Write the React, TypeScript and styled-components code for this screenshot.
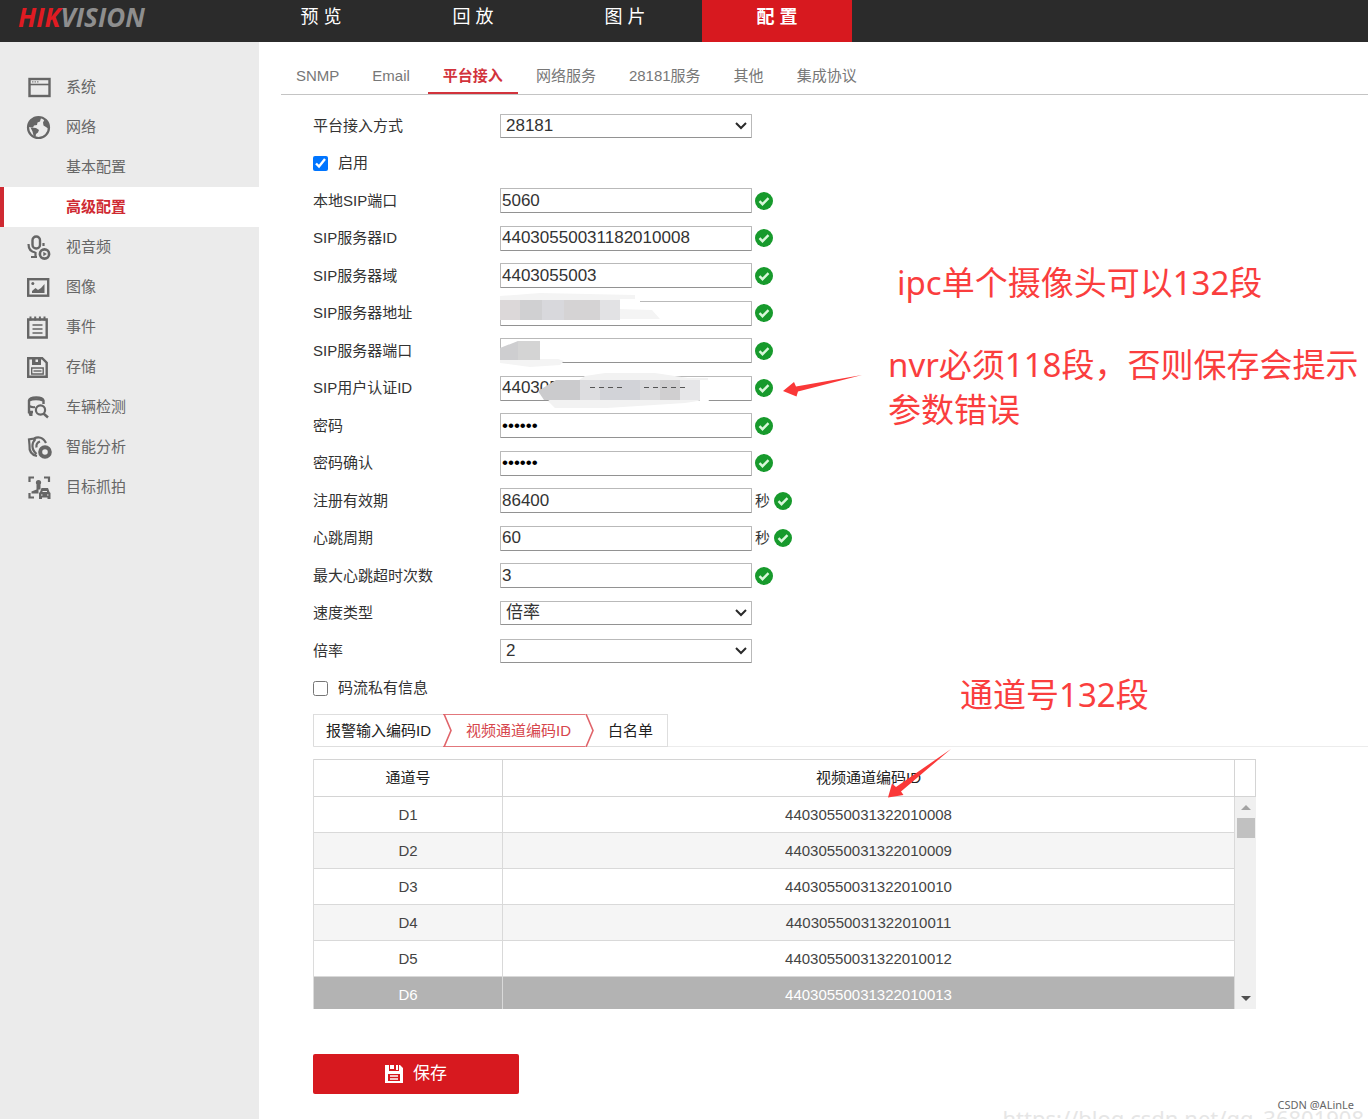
import React from "react";
import styled, { createGlobalStyle, css } from "styled-components";

const sans = '"Liberation Sans", Arial, "Noto Sans CJK SC", sans-serif';
const red = "#d7191f";

const GlobalStyle = createGlobalStyle`
  *, *::before, *::after { box-sizing: border-box; }
  body { margin: 0; background: #fff; color: #333; font: 15px/20px ${sans}; }
  input, select, button { font-family: inherit; }
`;

const Page = styled.div`
  position: relative;
  display: flex;
  flex-direction: column;
  min-height: 100vh;
  overflow: hidden;
`;

const Header = styled.header`
  display: flex;
  height: 42px;
  background: #2b2b2b;
`;

const Logo = styled.a`
  width: 246px;
  padding-left: 18px;
  font: italic 700 26px/34px "Open Sans", "Noto Sans", sans-serif;
  color: #8e8e8e;
  text-decoration: none;
`;

const LogoAccent = styled.span`
  color: #e01b22;
`;

const TopNav = styled.nav`
  display: flex;
  gap: 2px;
`;

const TopLink = styled.a<{ $active?: boolean }>`
  width: 150px;
  height: 42px;
  font-size: 18px;
  line-height: 34px;
  text-align: center;
  text-decoration: none;
  color: #fff;
  font-weight: ${(p) => (p.$active ? 700 : 400)};
  background: ${(p) => (p.$active ? red : "transparent")};
`;

const Body = styled.div`
  display: flex;
  flex: 1;
`;

const Sidebar = styled.nav`
  flex: 0 0 259px;
  padding-top: 25px;
  background: #ebebeb;
`;

const SideLink = styled.a<{ $active?: boolean }>`
  display: flex;
  align-items: center;
  height: 40px;
  padding-left: 22px;
  border-left: 4px solid transparent;
  color: #666;
  text-decoration: none;
  ${(p) =>
    p.$active &&
    css`
      background: #fff;
      border-left-color: #cf2a32;
      color: #cf2a32;
      font-weight: 700;
    `}
`;

const SideIcon = styled.span`
  flex: 0 0 40px;
  height: 24px;
  svg { display: block; }
`;

const Main = styled.main`
  flex: 1;
  min-width: 0;
  padding-bottom: 25px;
`;

const Tabs = styled.nav`
  display: flex;
  gap: 3px;
  margin-left: 22px;
  padding-top: 17px;
  border-bottom: 1px solid #c4c4c4;
`;

const Tab = styled.a<{ $active?: boolean }>`
  height: 35px;
  padding: 0 15px;
  line-height: 33px;
  text-decoration: none;
  border-bottom: 2px solid ${(p) => (p.$active ? "#d2333c" : "transparent")};
  color: ${(p) => (p.$active ? "#d2333c" : "#777")};
  font-weight: ${(p) => (p.$active ? 700 : 400)};
`;

const Content = styled.form`
  margin-left: 54px;
  padding-top: 12px;
`;

const Row = styled.div`
  display: flex;
  align-items: center;
  height: 37px;
  &:nth-child(even) { height: 38px; }
`;

const Label = styled.label`
  flex: 0 0 187px;
`;

const CheckLabel = styled.label`
  display: flex;
  align-items: center;
  gap: 10px;
`;

const Checkbox = styled.input`
  width: 15px;
  height: 15px;
  margin: 0;
`;

const FieldBox = styled.span`
  position: relative;
  display: flex;
  flex: 0 0 252px;
`;

const fieldStyle = css`
  width: 100%;
  border: 1px solid #b9b9b9;
  border-bottom-color: #929292;
  border-radius: 1px;
  background: #fff;
  color: #333;
  font-size: 17px;
  line-height: 20px;
`;

const TextInput = styled.input`
  ${fieldStyle}
  height: 25px;
  padding: 0 1px;
  &[type="password"] { color: #000; }
`;

const Select = styled.select`
  ${fieldStyle}
  appearance: none;
  height: 24px;
  padding: 0 24px 0 5px;
`;

const SelectArrow = styled.svg`
  position: absolute;
  right: 5px;
  top: 8px;
  pointer-events: none;
`;

const Mask = styled.svg`
  position: absolute;
  left: 0;
  top: -8px;
  pointer-events: none;
`;

const Suffix = styled.span`
  display: flex;
  align-items: center;
  gap: 4px;
  padding-left: 3px;
`;

const StepBar = styled.nav`
  display: flex;
  height: 33px;
  margin-top: 7px;
  border-left: 1px solid #dcdcdc;
  border-bottom: 1px solid #ececec;
`;

const Step = styled.a<{ $active?: boolean; $first?: boolean; $last?: boolean }>`
  height: 33px;
  padding: 0 ${(p) => (p.$first ? 12 : 14)}px;
  line-height: 31px;
  text-decoration: none;
  color: ${(p) => (p.$active ? "#d6454c" : "#222")};
  border: solid ${(p) => (p.$active ? "#e2777c" : "#dedede")};
  border-width: 1px ${(p) => (p.$last ? 1 : 0)}px 1px 0;
`;

const StepArrow = styled.svg`
  flex: 0 0 9px;
`;

const TableFrame = styled.div`
  display: grid;
  grid-template-columns: 1fr 21px;
  grid-template-rows: 250px;
  margin: 12px 112px 0 0;
  overflow: hidden;
`;

const Table = styled.table`
  width: 100%;
  align-self: start;
  border-collapse: separate;
  border-spacing: 0;
  table-layout: fixed;
  border-left: 1px solid #dcdcdc;
`;

const HeadCell = styled.th<{ $narrow?: boolean }>`
  width: ${(p) => (p.$narrow ? "189px" : "auto")};
  height: 38px;
  padding: 0;
  font-weight: 400;
  color: #222;
  border: solid #d4d4d4;
  border-width: 1px 1px 1px 0;
`;

const BodyRow = styled.tr<{ $selected?: boolean }>`
  background: ${(p) => (p.$selected ? "#b3b3b3" : "#fff")};
  color: ${(p) => (p.$selected ? "#fff" : "#444")};
  &:nth-child(even) { background: ${(p) => (p.$selected ? "#b3b3b3" : "#f5f5f5")}; }
`;

const Cell = styled.td`
  height: 36px;
  padding: 0;
  text-align: center;
  border: solid #d9d9d9;
  border-width: 0 1px 1px 0;
`;

const ScrollColumn = styled.div`
  display: flex;
  flex-direction: column;
`;

const ScrollHead = styled.div`
  height: 38px;
  border: solid #d4d4d4;
  border-width: 1px 1px 1px 0;
`;

const ScrollTrack = styled.div`
  display: flex;
  flex: 1;
  flex-direction: column;
  align-items: center;
  background: #f0f0f0;
`;

const ScrollButton = styled.button`
  display: flex;
  align-items: center;
  justify-content: center;
  width: 18px;
  height: 21px;
  padding: 0;
  border: 0;
  background: transparent;
`;

const ScrollThumb = styled.div`
  width: 18px;
  height: 20px;
  margin-bottom: auto;
  background: #c1c1c1;
`;

const SaveButton = styled.button`
  display: flex;
  align-items: center;
  justify-content: center;
  gap: 10px;
  width: 206px;
  height: 40px;
  margin-top: 45px;
  border: 0;
  border-radius: 2px;
  background: ${red};
  color: #fff;
  font-size: 17px;
  line-height: 24px;
`;

const Note = styled.p<{ $x: number; $y: number }>`
  position: absolute;
  left: ${(p) => p.$x}px;
  top: ${(p) => p.$y}px;
  margin: 0;
  font: 33px/45px "Noto Sans", "Noto Sans CJK SC", sans-serif;
  color: #fa3e3e;
  white-space: nowrap;
`;

const NoteArrow = styled.svg<{ $x: number; $y: number }>`
  position: absolute;
  left: ${(p) => p.$x}px;
  top: ${(p) => p.$y}px;
  fill: #fa3838;
`;

const UrlMark = styled.span`
  position: absolute;
  right: 4px;
  bottom: -13px;
  font: 22px/28px "Noto Sans", sans-serif;
  color: #e6e6e6;
`;

const AuthorMark = styled.span`
  position: absolute;
  right: 14px;
  bottom: 4px;
  font: 11px/20px "Noto Sans", sans-serif;
  color: #666;
`;

type IconName =
  | "system" | "network" | "av" | "image" | "event"
  | "storage" | "vehicle" | "smart" | "target";

const iconShapes: Record<IconName, React.ReactNode> = {
  system: (
    <>
      <rect x="3.5" y="4" width="20" height="17" strokeWidth="2.4" />
      <path d="M3 9.500h21" strokeWidth="1.6" />
      <path d="M6 6.900h1.5M8.5 6.900H10M11 6.900h1.5" strokeWidth="1" />
    </>
  ),
  network: (
    <>
      <circle cx="12.500" cy="12.500" r="10.500" strokeWidth="2.200" />
      <path d="M2.500 12C2.500 7 7 2.500 12 2.500l3 .500-1 3.500-2.500 1-.500 2.500-3 .500-1 2z" fill="#666" stroke="none" />
      <path d="M4.500 12.500l5.500.500 3 2-1 2.500-2 1.500-.500 3-2-1.500-1-4z" fill="#666" stroke="none" />
      <path d="M18.500 4.500l3.500 4v5l-2-1.500-2.500-1.500-.500-3z" fill="#666" stroke="none" />
    </>
  ),
  av: (
    <>
      <rect x="6.500" y="1.500" width="7.500" height="12" rx="3.700" strokeWidth="2.400" />
      <path d="M2.500 9c0 6 3 8 7 8.500M17.500 8v3M9.500 17v5M5 22h6" strokeWidth="2.200" />
      <circle cx="18.500" cy="19" r="4.600" strokeWidth="2.600" />
      <path d="M17.300 16.800l3.500 2.200-3.500 2.200z" fill="#666" stroke="none" />
    </>
  ),
  image: (
    <>
      <rect x="2.200" y="4.200" width="20" height="16.500" strokeWidth="2.400" />
      <path d="M6 18v-2l3.500-3 2.500 2 3-2 3.500-4v9z" fill="#666" stroke="none" />
      <circle cx="6.800" cy="8.500" r="1.500" fill="#666" stroke="none" />
    </>
  ),
  event: (
    <>
      <path d="M2.200 4.500h18.500v18H2.200z" strokeWidth="2.400" />
      <path d="M4.500 1.500v4M9.200 1.500v4M13.900 1.500v4M18.500 1.500v4" strokeWidth="2" />
      <path d="M6.500 10h10M6.500 14h10M6.500 18h10" strokeWidth="1.500" />
    </>
  ),
  storage: (
    <>
      <path d="M2.200 3.200h14l4.500 4.500v14H2.200z" strokeWidth="2.400" />
      <path d="M6 3v7h9V3h-3v4H9.500V3z" fill="#666" stroke="none" />
      <path d="M5.700 19v-6h11.500v6z" strokeWidth="1.400" />
      <path d="M7.500 16h8" strokeWidth="1.400" />
    </>
  ),
  vehicle: (
    <>
      <path d="M17.500 9V5.500c-1-4-13.500-4-14.500 0V17h4" strokeWidth="2.400" />
      <path d="M3 5.500c4-1.500 10-1.500 14 0M3 11c2 1 4 1.500 6 1" strokeWidth="2" />
      <path d="M2 17h4.500v4h-3z" fill="#666" stroke="none" />
      <circle cx="14.500" cy="15" r="4.600" strokeWidth="2.200" />
      <path d="M17.500 18.500l4.500 4" strokeWidth="2.400" />
    </>
  ),
  smart: (
    <>
      <path d="M11 21C6 20 3 16 3.500 10L3 4.500 8 3.500c4-2 9-1.500 12 4.500M9.500 4c-4 4-4.500 10 1 15M14 6.500c-3 1-4 3-3.500 6" strokeWidth="2.200" />
      <circle cx="19" cy="17" r="4.800" strokeWidth="4" />
    </>
  ),
  target: (
    <>
      <path d="M3.500 7V2.500H8M18 2.500h5V7M3.500 18v4.500H8" strokeWidth="2.200" />
      <circle cx="12.500" cy="7.500" r="2.600" fill="#666" stroke="none" />
      <path d="M10.500 9.500h4v5h-2v4h-7v-2l5-2z" fill="#666" stroke="none" />
      <path d="M14 17l1.500-4h6.500l1.500 4 1 1v6h-3v-1.500h-5.500V24h-3v-6z" fill="#666" stroke="none" />
      <path d="M16.500 16.500h4.500M15 20h1.500M21 20h1.500" stroke="#ebebeb" strokeWidth="1" />
    </>
  ),
};

const Icon = ({ name }: { name: IconName }) => (
  <svg width="26" height="25" viewBox="0 0 26 25" fill="none" stroke="#666" aria-hidden="true">
    {iconShapes[name]}
  </svg>
);

const Valid = () => (
  <svg width="18" height="18" viewBox="0 0 18 18" aria-hidden="true">
    <circle cx="9" cy="9" r="9" fill="#179a2c" />
    <path d="M4.500 9.200l3 3 6-6" fill="none" stroke="#d9f7da" strokeWidth="2.400" />
  </svg>
);

const Chevron = () => (
  <SelectArrow width="12" height="8" viewBox="0 0 12 8" aria-hidden="true">
    <path d="M1 1l5 5 5-5" fill="none" stroke="#2a2a2a" strokeWidth="2" />
  </SelectArrow>
);

const Divider = ({ color }: { color: string }) => (
  <StepArrow width="9" height="33" viewBox="0 0 9 33" aria-hidden="true">
    <path d="M0 .500h9M0 32.500h9" fill="none" stroke={color} />
    <path d="M1 0l7 16.500L1 33" fill="none" stroke="#e0646a" strokeWidth="1.600" />
  </StepArrow>
);

const masks: Record<string, React.ReactNode> = {
  address: (
    <>
      <path d="M0 3l40-3 95 2v5l-17 4v5l34 1 8 9H20L0 25z" fill="#f4f4f4" />
      <path d="M120 6h20v10h-20z" fill="#fff" />
      <path d="M0 7h20v20H0z" fill="#dcd8d9" />
      <path d="M20 7h22v20H20z" fill="#d0d0d2" />
      <path d="M42 7h22v20H42z" fill="#d8d8dc" />
      <path d="M64 7h36v20H64z" fill="#d5d3d4" />
      <path d="M100 7h20v20h-20z" fill="#e2e2e4" />
    </>
  ),
  port: (
    <>
      <path d="M0 29h58l6 2-4 4-30 2-30-4z" fill="#f4f4f4" />
      <path d="M0 18l18-7v19H0z" fill="#ceced0" />
      <path d="M18 11h22v19H18z" fill="#d4d4d4" />
    </>
  ),
  userId: (
    <>
      <path d="M85 8l20-3h50l33 5h20v14l-4 8-19 3-78 5H55l-7-7z" fill="#f2f2f2" />
      <path d="M200 12h10v18l-2 4h-8z" fill="#fff" />
      <path d="M38 23l18-11h24v20H44z" fill="#cbcbcd" />
      <path d="M80 12h20v20H80z" fill="#dddde0" />
      <path d="M100 12h40v20h-40z" fill="#d2d3d8" />
      <path d="M140 12h20v20h-20z" fill="#dadadc" />
      <path d="M160 12h20v20h-20z" fill="#d0cfd0" />
      <path d="M180 12h20v20h-20z" fill="#e6e6e8" />
      <path d="M90 19.500h36M144 19.500h41" stroke="#555" strokeDasharray="5 4" />
    </>
  ),
};

type Field = {
  id: string;
  label: string;
  value: string;
  kind?: "select" | "password" | "check";
  unit?: string;
  checked?: boolean;
};

const fields: Field[] = [
  { id: "access", label: "平台接入方式", value: "28181", kind: "select" },
  { id: "enable", label: "启用", value: "", kind: "check", checked: true },
  { id: "localPort", label: "本地SIP端口", value: "5060" },
  { id: "serverId", label: "SIP服务器ID", value: "44030550031182010008" },
  { id: "domain", label: "SIP服务器域", value: "4403055003" },
  { id: "address", label: "SIP服务器地址", value: "" },
  { id: "port", label: "SIP服务器端口", value: "" },
  { id: "userId", label: "SIP用户认证ID", value: "440305" },
  { id: "password", label: "密码", value: "123456", kind: "password" },
  { id: "confirm", label: "密码确认", value: "123456", kind: "password" },
  { id: "expiry", label: "注册有效期", value: "86400", unit: "秒" },
  { id: "heartbeat", label: "心跳周期", value: "60", unit: "秒" },
  { id: "timeouts", label: "最大心跳超时次数", value: "3" },
  { id: "speedType", label: "速度类型", value: "倍率", kind: "select" },
  { id: "rate", label: "倍率", value: "2", kind: "select" },
  { id: "private", label: "码流私有信息", value: "", kind: "check" },
];

const FieldRow = ({ field }: { field: Field }) => {
  const { id, label, value, kind, unit, checked } = field;
  if (kind === "check") {
    return (
      <Row>
        <CheckLabel htmlFor={id}>
          <Checkbox type="checkbox" id={id} defaultChecked={checked} />
          {label}
        </CheckLabel>
      </Row>
    );
  }
  if (kind === "select") {
    return (
      <Row>
        <Label htmlFor={id}>{label}</Label>
        <FieldBox>
          <Select id={id} defaultValue={value}>
            <option>{value}</option>
          </Select>
          <Chevron />
        </FieldBox>
      </Row>
    );
  }
  return (
    <Row>
      <Label htmlFor={id}>{label}</Label>
      <FieldBox>
        <TextInput
          id={id}
          type={kind === "password" ? "password" : "text"}
          autoComplete="off"
          defaultValue={value}
        />
        {masks[id] && (
          <Mask width="216" height="42" viewBox="0 0 216 42" aria-hidden="true">
            {masks[id]}
          </Mask>
        )}
      </FieldBox>
      <Suffix>
        {unit}
        <Valid />
      </Suffix>
    </Row>
  );
};

const sideItems: { text: string; icon?: IconName; active?: boolean }[] = [
  { text: "系统", icon: "system" },
  { text: "网络", icon: "network" },
  { text: "基本配置" },
  { text: "高级配置", active: true },
  { text: "视音频", icon: "av" },
  { text: "图像", icon: "image" },
  { text: "事件", icon: "event" },
  { text: "存储", icon: "storage" },
  { text: "车辆检测", icon: "vehicle" },
  { text: "智能分析", icon: "smart" },
  { text: "目标抓拍", icon: "target" },
];

const topItems = ["预 览", "回 放", "图 片", "配 置"];
const tabItems = ["SNMP", "Email", "平台接入", "网络服务", "28181服务", "其他", "集成协议"];

const channels = [
  ["D1", "44030550031322010008"],
  ["D2", "44030550031322010009"],
  ["D3", "44030550031322010010"],
  ["D4", "44030550031322010011"],
  ["D5", "44030550031322010012"],
  ["D6", "44030550031322010013"],
];

export default function App() {
  return (
    <Page>
      <GlobalStyle />
      <Header>
        <Logo href="#">
          <LogoAccent>HIK</LogoAccent>VISION
        </Logo>
        <TopNav>
          {topItems.map((text, i) => (
            <TopLink key={text} href="#" $active={i === 3}>{text}</TopLink>
          ))}
        </TopNav>
      </Header>
      <Body>
        <Sidebar>
          {sideItems.map(({ text, icon, active }) => (
            <SideLink key={text} href="#" $active={active}>
              <SideIcon>{icon && <Icon name={icon} />}</SideIcon>
              {text}
            </SideLink>
          ))}
        </Sidebar>
        <Main>
          <Tabs>
            {tabItems.map((text, i) => (
              <Tab key={text} href="#" $active={i === 2}>{text}</Tab>
            ))}
          </Tabs>
          <Content onSubmit={(e) => e.preventDefault()}>
            <div>
              {fields.map((field) => (
                <FieldRow key={field.id} field={field} />
              ))}
            </div>
            <StepBar>
              <Step href="#" $first>报警输入编码ID</Step>
              <Divider color="#e2777c" />
              <Step href="#" $active>视频通道编码ID</Step>
              <Divider color="#dedede" />
              <Step href="#" $last>白名单</Step>
            </StepBar>
            <TableFrame>
              <Table>
                <thead>
                  <tr>
                    <HeadCell $narrow>通道号</HeadCell>
                    <HeadCell>视频通道编码ID</HeadCell>
                  </tr>
                </thead>
                <tbody>
                  {channels.map(([name, code], i) => (
                    <BodyRow key={name} $selected={i === 5}>
                      <Cell>{name}</Cell>
                      <Cell>{code}</Cell>
                    </BodyRow>
                  ))}
                </tbody>
              </Table>
              <ScrollColumn>
                <ScrollHead />
                <ScrollTrack>
                  <ScrollButton type="button" aria-label="向上滚动">
                    <svg width="10" height="5" viewBox="0 0 10 5"><path d="M0 5l5-5 5 5z" fill="#a3a3a3" /></svg>
                  </ScrollButton>
                  <ScrollThumb />
                  <ScrollButton type="button" aria-label="向下滚动">
                    <svg width="10" height="5" viewBox="0 0 10 5"><path d="M0 0l5 5 5-5z" fill="#505050" /></svg>
                  </ScrollButton>
                </ScrollTrack>
              </ScrollColumn>
            </TableFrame>
            <SaveButton type="submit">
              <svg width="18" height="18" viewBox="0 0 18 18" aria-hidden="true">
                <path d="M0 0h4v6h10V0h1l3 3v15H0z" fill="#fff" />
                <path d="M5 0h4v4H5zM11 0h2v5h-2z" fill="#fff" />
                <path d="M3 9h12v7H3z" fill={red} />
                <path d="M5 11h8M5 14h8" stroke="#fff" strokeWidth="1.400" />
              </svg>
              保存
            </SaveButton>
          </Content>
        </Main>
      </Body>

      <Note $x={897} $y={260}>ipc单个摄像头可以132段</Note>
      <Note $x={888} $y={342}>
        nvr必须118段，否则保存会提示
        <br />
        参数错误
      </Note>
      <Note $x={960} $y={672}>通道号132段</Note>
      <NoteArrow $x={783} $y={374} width="80" height="24" viewBox="0 0 80 24" aria-hidden="true">
        <path d="M0 17l11-9 2 4.500L79 1 15 17.500l-1.500 5z" />
      </NoteArrow>
      <NoteArrow $x={888} $y={749} width="64" height="49" viewBox="0 0 64 49" aria-hidden="true">
        <path d="M0 48.500l4-14 4 3.500L63 0 13 42.500l2.500 3.500z" />
      </NoteArrow>
      <UrlMark>https://blog.csdn.net/qq_36801908</UrlMark>
      <AuthorMark>CSDN @ALinLe</AuthorMark>
    </Page>
  );
}
